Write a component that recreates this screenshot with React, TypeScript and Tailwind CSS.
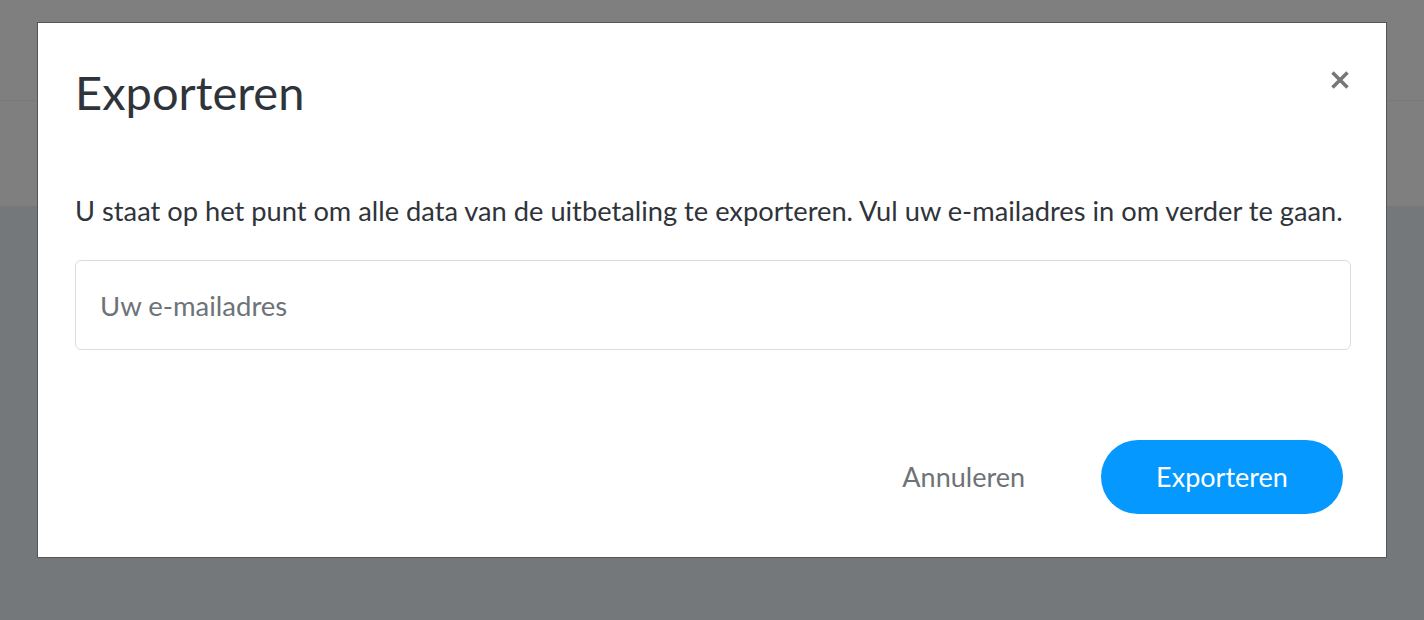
export default function App() {
  return (
    <div className="relative h-[620px] w-full overflow-hidden bg-[#75787b] font-['Lato',sans-serif]">
      {/* page behind the overlay */}
      <div className="h-[101px] border-b border-[#797979] bg-[#7f7f7f]" />
      <div className="h-[105px] bg-[#7f7f7f]" />

      {/* modal */}
      <div className="absolute left-[37px] top-[22px] flex h-[536px] w-[1350px] flex-col border border-[#555] bg-white px-[37px]">
        <div className="flex items-start justify-between pt-[46px]">
          <h2 className="text-[47px] leading-none text-[#2f343a]">Exporteren</h2>
          <button className="mr-[-1px] mt-[1px] text-[#777]">
            <svg width="20" height="20" viewBox="0 0 20 20">
              <path d="M2.5 2.5 L17.5 17.5 M17.5 2.5 L2.5 17.5" stroke="currentColor" strokeWidth="3.6" strokeLinecap="butt" />
            </svg>
          </button>
        </div>
        <p className="mt-[81px] text-[27.25px] leading-none text-[#2f343a]">
          U staat op het punt om alle data van de uitbetaling te exporteren. Vul uw e-mailadres in om verder te gaan.
        </p>
        <input
          type="email"
          placeholder="Uw e-mailadres"
          className="mt-[36px] h-[90px] w-[1276px] rounded-[6px] border border-[#dcdcdc] px-[24px] text-[27.5px] text-[#2f343a] outline-none placeholder:text-[#6e7378]"
        />
        <div className="mt-[90px] flex items-center justify-end gap-[76px] pr-[6px]">
          <button className="text-[27px] text-[#6e7378]">Annuleren</button>
          <button className="h-[74px] w-[242px] rounded-full bg-[#0598fe] text-[27px] text-white">Exporteren</button>
        </div>
      </div>
    </div>
  );
}
